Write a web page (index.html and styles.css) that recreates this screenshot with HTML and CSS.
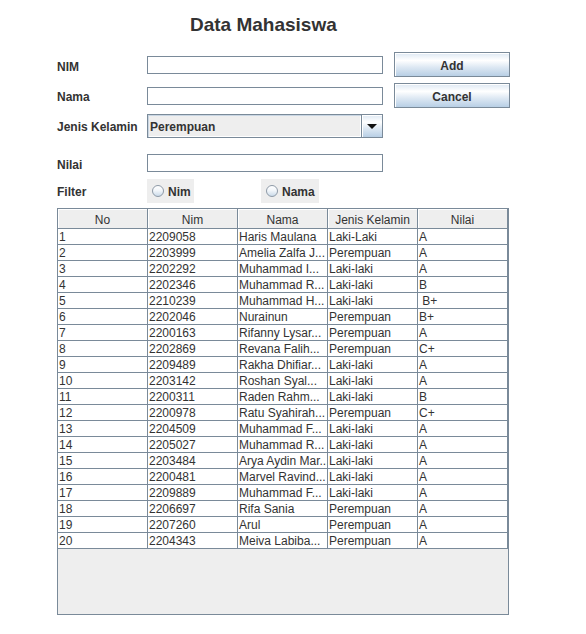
FILE: index.html
```html
<!DOCTYPE html>
<html lang="id">
<head>
<meta charset="utf-8">
<title>Data Mahasiswa</title>
<link rel="stylesheet" href="styles.css">
</head>
<body>
<div class="frame">
  <h1 class="title">Data Mahasiswa</h1>
  <div class="form">
    <label class="lbl lbl-nim">NIM</label>
    <input class="field" type="text">
    <button class="btn">Add</button>

    <label class="lbl">Nama</label>
    <input class="field" type="text">
    <button class="btn">Cancel</button>

    <label class="lbl">Jenis Kelamin</label>
    <div class="combo">
      <span class="combo-value">Perempuan</span>
      <span class="combo-arrow">
        <svg width="10" height="5" viewBox="0 0 10 5"><polygon points="0,0 10,0 5,5" fill="#111"/></svg>
      </span>
    </div>
    <span class="spacer"></span>

    <label class="lbl lbl-end">Nilai</label>
    <input class="field field-end" type="text">
    <span class="spacer"></span>

    <label class="lbl">Filter</label>
    <div class="radios">
      <label class="radio radio-nim"><span class="dot"></span><span class="radio-text">Nim</span></label>
      <label class="radio radio-nama"><span class="dot"></span><span class="radio-text">Nama</span></label>
    </div>
  </div>

  <div class="table-wrap">
    <table class="grid">
      <thead>
        <tr><th>No</th><th>Nim</th><th>Nama</th><th>Jenis Kelamin</th><th>Nilai</th></tr>
      </thead>
      <tbody>
        <tr><td>1</td><td>2209058</td><td>Haris Maulana</td><td>Laki-Laki</td><td>A</td></tr>
        <tr><td>2</td><td>2203999</td><td>Amelia Zalfa J...</td><td>Perempuan</td><td>A</td></tr>
        <tr><td>3</td><td>2202292</td><td>Muhammad I...</td><td>Laki-laki</td><td>A</td></tr>
        <tr><td>4</td><td>2202346</td><td>Muhammad R...</td><td>Laki-laki</td><td>B</td></tr>
        <tr><td>5</td><td>2210239</td><td>Muhammad H...</td><td>Laki-laki</td><td> B+</td></tr>
        <tr><td>6</td><td>2202046</td><td>Nurainun</td><td>Perempuan</td><td>B+</td></tr>
        <tr><td>7</td><td>2200163</td><td>Rifanny Lysar...</td><td>Perempuan</td><td>A</td></tr>
        <tr><td>8</td><td>2202869</td><td>Revana Falih...</td><td>Perempuan</td><td>C+</td></tr>
        <tr><td>9</td><td>2209489</td><td>Rakha Dhifiar...</td><td>Laki-laki</td><td>A</td></tr>
        <tr><td>10</td><td>2203142</td><td>Roshan Syal...</td><td>Laki-laki</td><td>A</td></tr>
        <tr><td>11</td><td>2200311</td><td>Raden Rahm...</td><td>Laki-laki</td><td>B</td></tr>
        <tr><td>12</td><td>2200978</td><td>Ratu Syahirah...</td><td>Perempuan</td><td>C+</td></tr>
        <tr><td>13</td><td>2204509</td><td>Muhammad F...</td><td>Laki-laki</td><td>A</td></tr>
        <tr><td>14</td><td>2205027</td><td>Muhammad R...</td><td>Laki-laki</td><td>A</td></tr>
        <tr><td>15</td><td>2203484</td><td>Arya Aydin Mar...</td><td>Laki-laki</td><td>A</td></tr>
        <tr><td>16</td><td>2200481</td><td>Marvel Ravind...</td><td>Laki-laki</td><td>A</td></tr>
        <tr><td>17</td><td>2209889</td><td>Muhammad F...</td><td>Laki-laki</td><td>A</td></tr>
        <tr><td>18</td><td>2206697</td><td>Rifa Sania</td><td>Perempuan</td><td>A</td></tr>
        <tr><td>19</td><td>2207260</td><td>Arul</td><td>Perempuan</td><td>A</td></tr>
        <tr><td>20</td><td>2204343</td><td>Meiva Labiba...</td><td>Perempuan</td><td>A</td></tr>
      </tbody>
    </table>
  </div>
</div>
</body>
</html>
```

FILE: styles.css
```css
* { box-sizing: border-box; }

html, body {
  margin: 0;
  padding: 0;
  background: #ffffff;
}

body {
  font-family: "Liberation Sans", Arial, sans-serif;
  font-size: 12px;
  color: #333333;
}

.frame {
  width: 586px;
  height: 634px;
}

.title {
  margin: 0;
  padding: 14px 0 0 190px;
  font-size: 19px;
  line-height: 22px;
  font-weight: bold;
  color: #333333;
}

.form {
  margin: 16px 0 0 57px;
  display: grid;
  grid-template-columns: 90px 247px 116px;
  grid-template-rows: 25px 25px 24px 29px 24px;
  column-gap: 0;
  row-gap: 6px;
}

.lbl {
  align-self: center;
  padding-top: 2px;
  font-weight: bold;
  font-size: 12px;
  line-height: 16px;
  color: #333333;
  white-space: nowrap;
}

.lbl-nim { padding-top: 4px; }

.lbl-end {
  align-self: end;
  padding-top: 2px;
  line-height: 16px;
}

.field {
  align-self: center;
  width: 236px;
  height: 18px;
  margin: 0;
  padding: 0 2px;
  border: 1px solid #7a8a99;
  background: #ffffff;
  font: 12px "Liberation Sans", Arial, sans-serif;
  outline: none;
}

.field-end {
  align-self: end;
  margin-bottom: 1px;
}

.btn {
  width: 116px;
  height: 25px;
  margin: 0;
  padding: 2px 0 0 0;
  border: 1px solid #7a8a99;
  background: linear-gradient(#dde8f3 0%, #ffffff 32%, #dde8f3 62%, #b8cfe5 100%);
  box-shadow: inset 1px 1px 0 #ffffff;
  font: bold 12px "Liberation Sans", Arial, sans-serif;
  color: #333333;
}

.combo {
  width: 236px;
  height: 24px;
  display: flex;
  border: 1px solid #7a8a99;
}

.combo-value {
  flex: 1;
  display: flex;
  align-items: center;
  padding: 2px 0 0 2px;
  background: #eeeeee;
  box-shadow: inset 1px 1px 0 #c9d6e3, inset -1px -1px 0 #ffffff;
  font-weight: bold;
  color: #333333;
}

.combo-arrow {
  width: 21px;
  display: flex;
  align-items: center;
  justify-content: center;
  border-left: 1px solid #7a8a99;
  background: linear-gradient(#dde8f3 0%, #ffffff 32%, #dde8f3 62%, #b8cfe5 100%);
  box-shadow: inset 1px 1px 0 #ffffff;
}

.combo-arrow svg { display: block; margin-top: 1px; }

.spacer { display: block; }

.radios {
  grid-column: 2 / 4;
  display: flex;
  gap: 67px;
}

.radio {
  height: 24px;
  display: flex;
  align-items: center;
  gap: 4px;
  padding-left: 5px;
  background: #eeeeee;
  font-weight: bold;
  color: #333333;
}

.radio-text { padding-top: 2px; }

.radio-nim { width: 47px; }
.radio-nama { width: 58px; }

.dot {
  width: 12px;
  height: 12px;
  border-radius: 50%;
  border: 1px solid #8e9aa7;
  background: linear-gradient(#ffffff 0%, #f2f6fa 45%, #cbdbea 100%);
}

.table-wrap {
  margin: 5px 0 0 57px;
  width: 452px;
  height: 407px;
  border: 1px solid #7a8a99;
  background: #eeeeee;
}

.grid {
  width: 450px;
  table-layout: fixed;
  border-collapse: separate;
  border-spacing: 0;
  background: #ffffff;
}

.grid th {
  padding: 3px 0 0 0;
  line-height: 16px;
  font-weight: normal;
  font-size: 12px;
  text-align: center;
  background: #eeeeee;
  border-right: 1px solid #7a8a99;
  border-bottom: 1px solid #7a8a99;
  box-shadow: inset 1px 1px 0 #ffffff;
  color: #333333;
}

.grid td {
  padding: 2px 0 0 1px;
  line-height: 13px;
  height: 16px;
  font-size: 12px;
  border-right: 1px solid #7a8a99;
  border-bottom: 1px solid #7a8a99;
  white-space: pre;
  overflow: hidden;
  color: #333333;
}
```
